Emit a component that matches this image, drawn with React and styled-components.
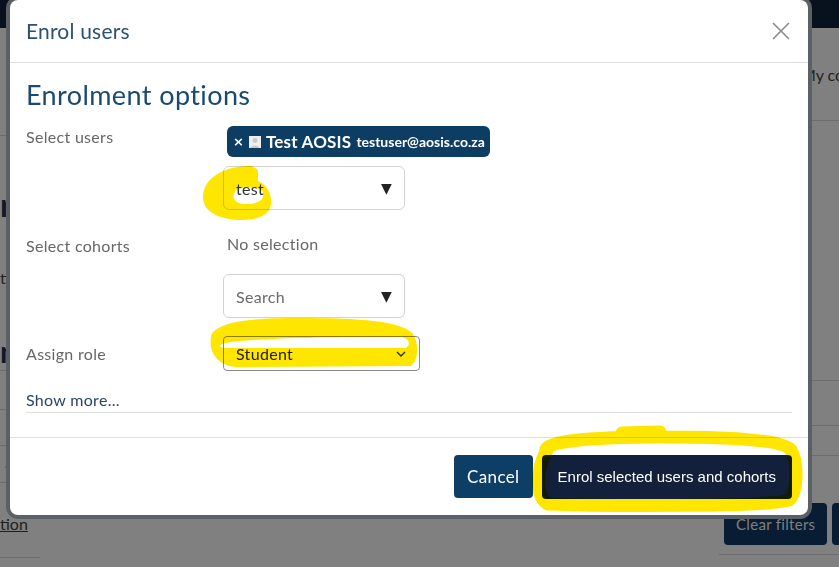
import React from 'react';
import styled, { createGlobalStyle } from 'styled-components';

const GlobalStyle = createGlobalStyle`
    html, body {
        margin: 0;
        padding: 0;
        background: #808080;
        font-family: "Lato", "Liberation Sans", sans-serif;
    }
`;

const Screen = styled.div`
    position: relative;
    width: 839px;
    height: 567px;
    overflow: hidden;
`;

//Page behind the dialog, already in its dimmed colours
const Page = styled.div`
    height: 567px;
    display: flex;
    flex-direction: column;
    background: #808080;
`;

const NavBar = styled.div`
    height: 28px;
    background: #08111e;
    flex-shrink: 0;
`;

const PageBody = styled.div`
    flex: 1;
    display: flex;
    justify-content: space-between;
`;

const EdgeColumn = styled.div`
    width: ${p => p.$width}px;
    display: flex;
    flex-direction: column;
    color: #222;
    font-size: 16px;
`;

const Block = styled.div`
    height: ${p => p.$height}px;
    flex-shrink: 0;
    display: flex;
    align-items: ${p => p.$align || 'center'};
    padding-left: ${p => p.$indent || 0}px;
    border-bottom: ${p => (p.$line ? '1px solid #6c6c6c' : 'none')};
    white-space: nowrap;
`;

const BigWord = styled.span`
    font-size: ${p => p.$size}px;
    font-weight: 700;
    color: #0d1a2a;
`;

const UnderLink = styled.span`
    text-decoration: underline;
    color: #1e1e1e;
`;

const ClearButton = styled.div`
    flex-shrink: 0;
    height: 42px;
    padding: 0 12px;
    background: #081d33;
    color: #808080;
    border-radius: 4px;
    display: flex;
    align-items: center;
    font-size: 15px;
    letter-spacing: 0.3px;
    margin-left: 5px;
`;

//Dialog layer over the page
const DialogLayer = styled.div`
    position: absolute;
    top: 0;
    left: 0;
    width: 839px;
    height: 567px;
`;

const Modal = styled.div`
    position: relative;
    isolation: isolate;
    margin-left: 10px;
    width: 798px;
    height: 515px;
    background: #fff;
    border-radius: 8px;
    box-shadow: 0 0 0 4px #5b5f66;
    display: flex;
    flex-direction: column;
    color: #333;
`;

const Header = styled.div`
    display: flex;
    align-items: center;
    justify-content: space-between;
    padding: 16px 18px 16px 16px;
    border-bottom: 1px solid #dedede;
`;

const Title = styled.h5`
    margin: 0;
    font-size: 21px;
    line-height: 30px;
    font-weight: 400;
    letter-spacing: 0.2px;
    color: #2b5275;
`;

const CloseButton = styled.div`
    width: 18px;
    height: 18px;
    display: flex;
    svg {
        width: 18px;
        height: 18px;
    }
`;

const Body = styled.div`
    flex: 1;
    padding: 16px 16px 0 16px;
`;

const SectionTitle = styled.h3`
    margin: 0 0 15px 0;
    font-size: 27px;
    line-height: 32px;
    font-weight: 400;
    letter-spacing: 0.4px;
    color: #194a72;
`;

const FormRow = styled.div`
    display: grid;
    grid-template-columns: 197px 1fr;
    margin-bottom: ${p => p.$gap}px;
`;

const Label = styled.div`
    font-size: 16px;
    line-height: 22px;
    letter-spacing: 0.3px;
    color: #676767;
    padding-top: ${p => p.$top || 0}px;
`;

const Controls = styled.div`
    display: flex;
    flex-direction: column;
    align-items: flex-start;
    gap: ${p => p.$gap || 0}px;
`;

const Chip = styled.div`
    margin-left: 4px;
    height: 31px;
    padding: 0 5px 0 6px;
    background: #0e3d64;
    border-radius: 6px;
    display: flex;
    align-items: center;
    gap: 5px;
    color: #fff;
    font-weight: 700;
    white-space: nowrap;
`;

const ChipRemove = styled.span`
    font-size: 13px;
    font-family: "DejaVu Sans", sans-serif;
`;

const ChipName = styled.span`
    font-size: 17px;
    letter-spacing: 0.2px;
`;

const ChipMail = styled.span`
    font-size: 14px;
`;

const NoSelection = styled.div`
    margin-left: 4px;
    font-size: 16px;
    line-height: 22px;
    letter-spacing: 0.3px;
    color: #676767;
`;

const AutoSelect = styled.div`
    box-sizing: border-box;
    width: 182px;
    height: 44px;
    border: 1px solid #d2d2d2;
    border-radius: 6px;
    display: flex;
    align-items: center;
    justify-content: space-between;
    padding: 0 12px;
    font-size: 16px;
    letter-spacing: 0.3px;
    color: ${p => (p.$placeholder ? '#6a6a6a' : '#333')};
`;

const Arrow = styled.span`
    font-family: "DejaVu Sans", sans-serif;
    font-size: 14px;
    color: #222;
`;

const RoleSelect = styled.div`
    box-sizing: border-box;
    width: 197px;
    height: 35px;
    border: 1px solid #8a8a8a;
    border-radius: 4px;
    display: flex;
    align-items: center;
    justify-content: space-between;
    padding: 0 12px;
    font-size: 16px;
    letter-spacing: 0.3px;
    color: #222;
    svg {
        width: 12px;
        height: 12px;
    }
`;

const ShowMore = styled.div`
    font-size: 16px;
    line-height: 22px;
    letter-spacing: 0.3px;
    color: #2a4664;
    padding-bottom: 1px;
    border-bottom: 1px solid #dedede;
`;

const Footer = styled.div`
    height: 77px;
    border-top: 1px solid #dedede;
    display: flex;
    align-items: center;
    justify-content: flex-end;
    gap: 9px;
    padding: 0 16px;
`;

const Button = styled.button`
    height: ${p => (p.$primary ? 44 : 43)}px;
    padding: 0 ${p => (p.$primary ? 16 : 13)}px;
    border: none;
    border-radius: 4px;
    background: ${p => (p.$primary ? '#12203b' : '#0d3e66')};
    color: #fff;
    font-size: ${p => (p.$primary ? 15 : 17)}px;
    letter-spacing: ${p => (p.$primary ? 0 : 0.4)}px;
    font-family: ${p => (p.$primary ? '"Liberation Sans", Arial, sans-serif' : '"Lato", sans-serif')};
`;

// highlighter layer, kept inside the isolated modal so it only blends with it
const Scribbles = styled.svg`
    position: absolute;
    top: 0;
    left: 0;
    width: 798px;
    height: 515px;
    pointer-events: none;
    mix-blend-mode: multiply;
`;

const UserIcon = () => (
    <svg width="12" height="12" viewBox="0 0 12 12">
        <rect width="12" height="12" fill="#eeeeee" />
        <circle cx="6" cy="4.5" r="2.4" fill="#c8c8c8" />
        <path d="M1.5 12 C2 8.5 10 8.5 10.5 12 Z" fill="#c8c8c8" />
    </svg>
);

const App = () => {
    return (
        <>
            <GlobalStyle />
            <Screen>
                <Page>
                    <NavBar />
                    <PageBody>
                        <EdgeColumn $width={40}>
                            <Block $height={107} $line />
                            <Block $height={50} />
                            <Block $height={36}><BigWord $size={32}>rt</BigWord></Block>
                            <Block $height={110}>ti</Block>
                            <Block $height={38} $line><BigWord $size={30}>n</BigWord></Block>
                            <Block $height={38} $line />
                            <Block $height={35} $line />
                            <Block $height={36} $line $indent={2}>⌄</Block>
                            <Block $height={25} />
                            <Block $height={30}><UnderLink>tion</UnderLink></Block>
                            <Block $height={19} $line />
                        </EdgeColumn>
                        <EdgeColumn $width={120}>
                            <Block $height={92} $line $indent={82}>My courses</Block>
                            <Block $height={259} $line />
                            <Block $height={44} $line />
                            <Block $height={29} $line />
                            <Block $height={47} />
                            <Block $height={51} $line $align="flex-start">
                                <ClearButton>Clear filters</ClearButton>
                                <ClearButton>Apply</ClearButton>
                            </Block>
                        </EdgeColumn>
                    </PageBody>
                </Page>

                <DialogLayer>
                    <Modal>
                        <Header>
                            <Title>Enrol users</Title>
                            <CloseButton>
                                <svg viewBox="0 0 18 18">
                                    <path d="M1 1 L17 17 M17 1 L1 17" stroke="#8a8a8a" strokeWidth="1.6" />
                                </svg>
                            </CloseButton>
                        </Header>
                        <Body>
                            <SectionTitle>Enrolment options</SectionTitle>
                            <FormRow $gap={23}>
                                <Label>Select users</Label>
                                <Controls $gap={9}>
                                    <Chip>
                                        <ChipRemove>×</ChipRemove>
                                        <UserIcon />
                                        <ChipName>Test AOSIS</ChipName>
                                        <ChipMail>testuser@aosis.co.za</ChipMail>
                                    </Chip>
                                    <AutoSelect>test<Arrow>▼</Arrow></AutoSelect>
                                </Controls>
                            </FormRow>
                            <FormRow $gap={18}>
                                <Label $top={2}>Select cohorts</Label>
                                <Controls $gap={19}>
                                    <NoSelection>No selection</NoSelection>
                                    <AutoSelect $placeholder>Search<Arrow>▼</Arrow></AutoSelect>
                                </Controls>
                            </FormRow>
                            <FormRow $gap={18}>
                                <Label $top={7}>Assign role</Label>
                                <Controls>
                                    <RoleSelect>
                                        Student
                                        <svg viewBox="0 0 12 12">
                                            <path d="M2 4 L6 8 L10 4" fill="none" stroke="#333" strokeWidth="1.4" />
                                        </svg>
                                    </RoleSelect>
                                </Controls>
                            </FormRow>
                            <ShowMore>Show more...</ShowMore>
                        </Body>
                        <Footer>
                            <Button>Cancel</Button>
                            <Button $primary>Enrol selected users and cohorts</Button>
                        </Footer>

                        <Scribbles viewBox="10 0 798 515">
                            <path
                                fillRule="evenodd"
                                fill="#ffe600"
                                d="M252,166 C228,165 204,176 203,196 C202,212 220,220 242,220 C262,220 273,212 271,199 C270,190 265,184 258,181 L258,170 Z
                                   M236,190 C244,186 258,186 263,192 C265,200 258,204 246,204 C236,204 230,199 236,190 Z"
                            />
                            <path
                                fillRule="evenodd"
                                fill="#ffe600"
                                d="M212,333 C222,321 252,318 300,318 C360,318 402,321 413,334 C419,343 419,360 411,366 L236,367 C219,366 206,352 212,333 Z
                                   M222,344 C240,339 300,337 402,337 C410,339 411,346 405,348 L228,348 C220,348 218,346 222,344 Z"
                            />
                            <path
                                fill="none"
                                stroke="#ffe600"
                                strokeWidth="13"
                                strokeLinecap="round"
                                d="M546,452 C541,440 600,437 660,437 C720,437 782,439 791,450 C798,462 798,492 789,500 C770,507 600,506 548,504 C536,498 536,470 546,452 Z M622,433 L660,432"
                            />
                        </Scribbles>
                    </Modal>
                </DialogLayer>
            </Screen>
        </>
    );
};

export default App;
